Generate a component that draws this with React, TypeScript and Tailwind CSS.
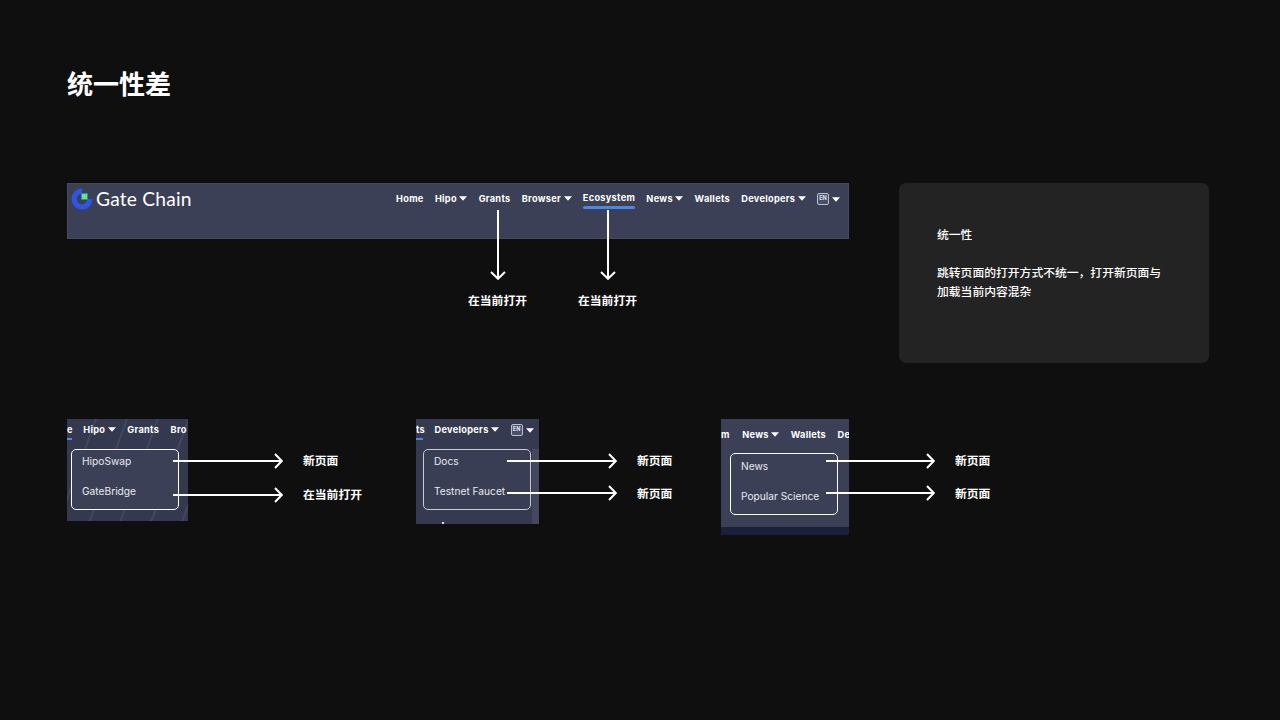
const cjk = "font-['Noto_Sans_CJK_SC',sans-serif]";
const nav = "font-['Inter','Liberation_Sans',sans-serif]";

function Caret() {
  return (
    <svg width="8" height="5" viewBox="0 0 8 5" className="shrink-0">
      <path d="M0 0.2 H8 L4 4.8 Z" fill="#ffffff" />
    </svg>
  );
}

function NavItem({ label, caret }: { label: string; caret?: boolean }) {
  return (
    <span className="flex items-center gap-[2.5px] shrink-0 whitespace-nowrap">
      <span className={`${nav} text-[9.2px] font-bold tracking-[0.3px] text-white leading-none`}>{label}</span>
      {caret && <Caret />}
    </span>
  );
}

function Lang() {
  return (
    <span className="flex items-center gap-[3px] shrink-0">
      <span className={`${nav} flex h-[12px] w-[12px] items-center justify-center rounded-[2px] border border-[#b8c0d8] bg-[#4a5068] text-[5.5px] font-bold leading-none text-[#dfe4f2]`}>EN</span>
      <Caret />
    </span>
  );
}

function DownArrow({ x, y, h }: { x: number; y: number; h: number }) {
  return (
    <svg className="absolute" style={{ left: x - 8, top: y }} width="16" height={h} viewBox={`0 0 16 ${h}`} fill="none" stroke="#ffffff" strokeWidth="2">
      <path d={`M8 0 V${h - 1.5}`} />
      <path d={`M1 ${h - 8} L8 ${h - 1.2} L15 ${h - 8}`} />
    </svg>
  );
}

function RightArrow({ x, y, w }: { x: number; y: number; w: number }) {
  return (
    <svg className="absolute" style={{ left: x, top: y - 8 }} width={w} height="16" viewBox={`0 0 ${w} 16`} fill="none" stroke="#ffffff" strokeWidth="2">
      <path d={`M0 8 H${w - 1.5}`} />
      <path d={`M${w - 8} 1 L${w - 1.2} 8 L${w - 8} 15`} />
    </svg>
  );
}

function Label({ x, y, text }: { x: number; y: number; text: string }) {
  return (
    <span className={`${cjk} absolute whitespace-nowrap text-[11.8px] font-bold leading-[18px] text-white`} style={{ left: x, top: y - 10 }}>
      {text}
    </span>
  );
}

function Logo() {
  return (
    <svg width="22" height="22" viewBox="0 0 22 22" className="shrink-0">
      <path d="M21.5 11 A10.5 10.5 0 1 1 11 0.5 V5.6 A5.4 5.4 0 1 0 16.4 11 Z" fill="#2f55e6" />
      <rect x="10.5" y="5.5" width="6" height="6" fill="#63e0a0" stroke="#2a8f78" strokeWidth="0.6" />
    </svg>
  );
}

function DropBox({ items, className }: { items: string[]; className: string }) {
  return (
    <div className={`flex flex-col rounded-[5px] border ${className}`}>
      {items.map((t) => (
        <span key={t} className={`${nav} whitespace-nowrap text-[10.2px] leading-[14px] text-[#e8eaf0]`}>{t}</span>
      ))}
    </div>
  );
}

export default function App() {
  return (
    <div className="flex h-[720px] w-[1280px] flex-col overflow-hidden bg-[#0f0f0f] pl-[67px] pt-[65px]">
      <h1 className={`${cjk} h-[36px] text-[26px] font-bold leading-[36px] text-white`}>统一性差</h1>

      <div className="mt-[82px] flex items-start">
        <div className="relative h-[179px] w-[782px]">
          <div className="flex h-[56px] w-[782px] border border-[#46495f] bg-[#3c4056] pl-[3px] pr-[8px]">
            <div className="flex h-[30px] items-center">
              <Logo />
              <span className="ml-[3px] font-['Lato',sans-serif] text-[19.2px] font-normal leading-none tracking-[0.2px] text-white">Gate Chain</span>
            </div>
            <div className="ml-auto flex h-[30px] items-center gap-[11.25px]">
              <NavItem label="Home" />
              <NavItem label="Hipo" caret />
              <NavItem label="Grants" />
              <NavItem label="Browser" caret />
              <span className="relative -mt-[2px]">
                <NavItem label="Ecosystem" />
                <span className="absolute -bottom-[6px] left-0 h-[2.5px] w-full rounded-full bg-[#4f86e0]" />
              </span>
              <NavItem label="News" caret />
              <NavItem label="Wallets" />
              <NavItem label="Developers" caret />
              <Lang />
            </div>
          </div>
          <DownArrow x={431} y={27} h={70} />
          <DownArrow x={541} y={27} h={70} />
          <Label x={401} y={118} text="在当前打开" />
          <Label x={511} y={118} text="在当前打开" />
        </div>

        <div className={`${cjk} ml-[50px] h-[180px] w-[310px] rounded-[7px] bg-[#232323] px-[38px] pt-[41px] text-[11.8px] font-medium leading-[19px] text-white`}>
          <p>统一性</p>
          <p className="mt-[19px]">跳转页面的打开方式不统一，打开新页面与<br />加载当前内容混杂</p>
        </div>
      </div>

      <div className="mt-[56px] flex items-start">
        {/* Cluster 1 */}
        <div className="relative h-[102px] w-[349px]">
          <div className="h-[102px] w-[121px] overflow-hidden bg-[#353950] bg-[repeating-linear-gradient(110deg,#353950_0px,#353950_26px,#474b62_27px,#353950_29px)] pt-[4px]">
            <div className="flex h-[14px] items-center gap-[11.5px]">
              <span className="relative mr-[-1px]">
                <NavItem label="e" />
                <span className="absolute -bottom-[5px] left-0 h-[2px] w-[5px] bg-[#4f86e0]" />
              </span>
              <NavItem label="Hipo" caret />
              <NavItem label="Grants" />
              <NavItem label="Bro" />
            </div>
            <div className="mt-[12px] ml-[4px]">
              <DropBox items={["HipoSwap", "GateBridge"]} className="h-[61px] w-[108px] gap-[16px] border-white bg-[#3c4056] pl-[10px] pt-[4px]" />
            </div>
          </div>
          <RightArrow x={106} y={42} w={110} />
          <RightArrow x={106} y={76} w={110} />
          <Label x={236} y={42} text="新页面" />
          <Label x={236} y={76} text="在当前打开" />
        </div>

        {/* Cluster 2 */}
        <div className="relative h-[105px] w-[305px]">
          <div className="relative h-[105px] w-[123px] overflow-hidden bg-[#363a50] pt-[4px]">
            <div className="flex h-[14px] items-center gap-[11.5px]">
              <span className="relative mr-[-2px]">
                <NavItem label="ts" />
                <span className="absolute -bottom-[5px] left-0 h-[2px] w-[7px] bg-[#4f86e0]" />
              </span>
              <NavItem label="Developers" caret />
              <Lang />
            </div>
            <div className="mt-[12px] ml-[7px]">
              <DropBox items={["Docs", "Testnet Faucet"]} className="h-[61px] w-[108px] gap-[16px] border-[#c9cbd3] bg-[#3a3e54] pl-[10px] pt-[4px]" />
            </div>
            <span className="absolute right-0 top-[30px] h-[75px] w-[7px] bg-[#44485e]" />
            <span className="absolute bottom-0 left-[26px] h-[2px] w-[2px] bg-[#d8dbe6]" />
          </div>
          <RightArrow x={91} y={42} w={110} />
          <RightArrow x={91} y={74} w={110} />
          <Label x={221} y={42} text="新页面" />
          <Label x={221} y={75} text="新页面" />
        </div>

        {/* Cluster 3 */}
        <div className="relative h-[116px] w-[280px]">
          <div className="flex h-[116px] w-[128px] flex-col overflow-hidden bg-[#3c4056] pt-[9px]">
            <div className="flex h-[14px] items-center gap-[11.5px]">
              <span className="mr-[1px]"><NavItem label="m" /></span>
              <NavItem label="News" caret />
              <NavItem label="Wallets" />
              <NavItem label="De" />
            </div>
            <div className="mt-[11px] ml-[9px]">
              <DropBox items={["News", "Popular Science"]} className="h-[62px] w-[108px] gap-[16px] border-white pl-[10px] pt-[5px]" />
            </div>
            <div className="mt-auto h-[8px] w-full bg-[#1c1f3a]" />
          </div>
          <RightArrow x={105} y={42} w={109} />
          <RightArrow x={105} y={74} w={109} />
          <Label x={234} y={42} text="新页面" />
          <Label x={234} y={75} text="新页面" />
        </div>
      </div>
    </div>
  );
}
